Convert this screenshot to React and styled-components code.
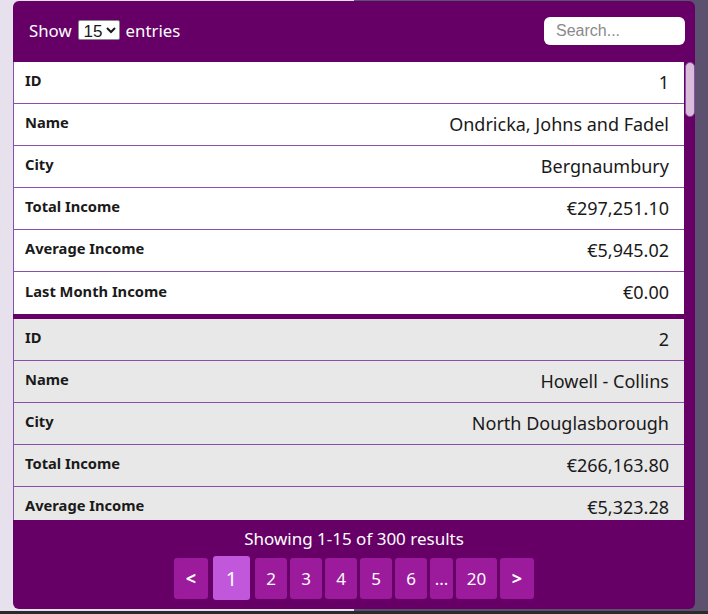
import React, { useState } from "react";
import styled, { createGlobalStyle } from "styled-components";

const GlobalStyle = createGlobalStyle`
  html, body {
    margin: 0;
    padding: 0;
  }
  body {
    font-family: "Noto Sans", "Open Sans", sans-serif;
    background: linear-gradient(to right, #e6e1ec 50%, #5c5270 50%);
  }
`;

const records = [
  {
    id: 1,
    name: "Ondricka, Johns and Fadel",
    city: "Bergnaumbury",
    total: "€297,251.10",
    average: "€5,945.02",
    lastMonth: "€0.00",
  },
  {
    id: 2,
    name: "Howell - Collins",
    city: "North Douglasborough",
    total: "€266,163.80",
    average: "€5,323.28",
    lastMonth: "€0.00",
  },
];

const fields = [
  ["ID", "id"],
  ["Name", "name"],
  ["City", "city"],
  ["Total Income", "total"],
  ["Average Income", "average"],
  ["Last Month Income", "lastMonth"],
];

export default function App() {
  const [perPage, setPerPage] = useState("15");
  const pages = ["2", "3", "4", "5", "6"];

  return (
    <>
      <GlobalStyle />
      <Page>
        <Card>
          <Header>
            <ShowLabel>
              Show
              <PerPage value={perPage} onChange={(e) => setPerPage(e.target.value)}>
                <option>10</option>
                <option>15</option>
                <option>25</option>
              </PerPage>
              entries
            </ShowLabel>
            <SearchInput placeholder="Search..." />
          </Header>

          <TableArea>
            <TableContent>
              {records.map((rec, i) => (
                <Record key={rec.id} $alt={i % 2 === 1}>
                  {fields.map(([label, key]) => (
                    <Row key={key}>
                      <Label>{label}</Label>
                      <Value>{rec[key]}</Value>
                    </Row>
                  ))}
                </Record>
              ))}
            </TableContent>
            <ScrollTrack>
              <ScrollThumb />
            </ScrollTrack>
          </TableArea>

          <Footer>
            <Summary>Showing 1-15 of 300 results</Summary>
            <Pager>
              <PageBtn $arrow>&lt;</PageBtn>
              <PageBtn $active>1</PageBtn>
              {pages.map((p) => (
                <PageBtn key={p}>{p}</PageBtn>
              ))}
              <PageBtn $narrow>...</PageBtn>
              <PageBtn $wide>20</PageBtn>
              <PageBtn $arrow>&gt;</PageBtn>
            </Pager>
          </Footer>
        </Card>
        <BottomStrip />
      </Page>
    </>
  );
}

const Page = styled.div`
  height: 614px;
  display: flex;
  flex-direction: column;
  align-items: flex-start;
  padding: 1px 13px 0;
  box-sizing: border-box;
  overflow: hidden;
`;

const Card = styled.div`
  width: 682px;
  height: 608px;
  flex-shrink: 0;
  background: #660066;
  border-radius: 6px;
  display: flex;
  flex-direction: column;
  overflow: hidden;
`;

const BottomStrip = styled.div`
  margin: 2px -13px 0;
  align-self: stretch;
  height: 3px;
  background: #2b2b2b;
`;

const Header = styled.div`
  height: 61px;
  flex-shrink: 0;
  display: flex;
  align-items: center;
  justify-content: space-between;
  padding: 0 10px 0 16px;
  box-sizing: border-box;
`;

const ShowLabel = styled.label`
  color: #ffffff;
  font-size: 16.8px;
  display: flex;
  align-items: center;
  gap: 6px;
  margin-top: -3px;
`;

const PerPage = styled.select`
  font-family: "Liberation Sans", Arial, sans-serif;
  font-size: 17px;
  height: 20px;
  padding: 0 0 0 1px;
  border: 1px solid #8a8a8a;
  border-radius: 2px;
  background: #ffffff;
  color: #1a1a1a;
`;

const SearchInput = styled.input`
  width: 141px;
  height: 28px;
  box-sizing: border-box;
  border: none;
  border-radius: 6px;
  padding: 0 12px;
  font-family: "Liberation Sans", Arial, sans-serif;
  font-size: 16px;
  outline: none;
  margin-top: -1px;

  &::placeholder {
    color: #8a8a8a;
  }
`;

const TableArea = styled.div`
  height: 458px;
  flex-shrink: 0;
  display: flex;
`;

const TableContent = styled.div`
  flex: 1;
  overflow: hidden;
`;

const ScrollTrack = styled.div`
  width: 11px;
  flex-shrink: 0;
  background: #660066;
  display: flex;
  flex-direction: column;
  align-items: center;
`;

const ScrollThumb = styled.div`
  width: 10px;
  height: 55px;
  box-sizing: border-box;
  background: #d9bcd9;
  border: 1px solid #8a4fa8;
  border-radius: 6px;
`;

const Record = styled.div`
  background: ${(p) => (p.$alt ? "#e8e8e8" : "#ffffff")};
  border-bottom: 5px solid #660066;
`;

const Row = styled.div`
  height: 42px;
  box-sizing: border-box;
  display: flex;
  align-items: center;
  justify-content: space-between;
  padding: 0 15px 0 11px;
  border-left: 1px solid #8a4fa8;
  border-bottom: 1px solid #8a4fa8;

  &:last-child {
    border-bottom: none;
  }
`;

const Label = styled.span`
  font-size: 14.7px;
  font-weight: 700;
  color: #1a1a1a;
  padding-bottom: 5px;
`;

const Value = styled.span`
  font-size: 18px;
  color: #1a1a1a;
  padding-bottom: 2px;
`;

const Footer = styled.div`
  flex: 1;
  display: flex;
  flex-direction: column;
  align-items: center;
  padding-top: 7px;
  gap: 6px;
`;

const Summary = styled.div`
  color: #ffffff;
  font-size: 17px;
`;

const Pager = styled.div`
  display: flex;
  align-items: center;
  gap: 3px;
`;

const PageBtn = styled.button`
  height: ${(p) => (p.$active ? "44px" : "41px")};
  min-width: ${(p) =>
    p.$active ? "37px" : p.$wide ? "41px" : p.$narrow ? "23px" : p.$arrow ? "34px" : "32px"};
  padding: 0;
  margin: ${(p) => (p.$active ? "0 2px" : "0")};
  border: none;
  border-radius: 3px;
  background: ${(p) => (p.$active ? "#c157db" : "#9c1a9c")};
  color: #ffffff;
  font-family: "Noto Sans", "Open Sans", sans-serif;
  font-size: ${(p) => (p.$active ? "20px" : p.$arrow ? "18px" : "17px")};
  font-weight: ${(p) => (p.$arrow ? 700 : 400)};
  cursor: pointer;
`;
